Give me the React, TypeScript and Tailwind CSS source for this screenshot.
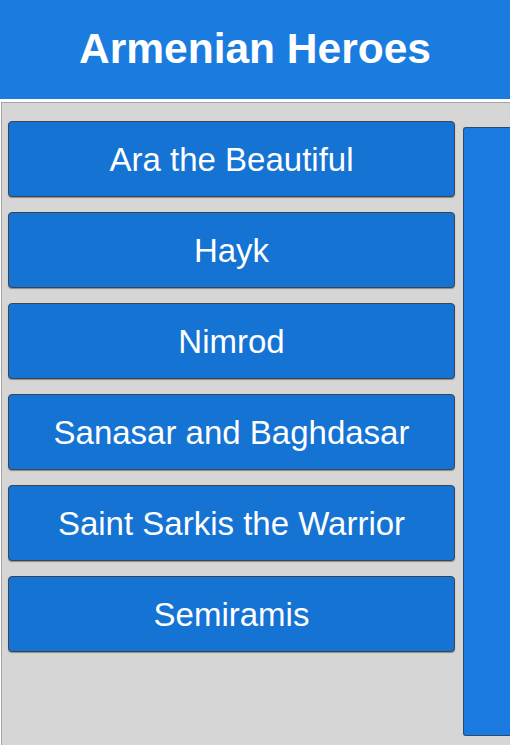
const heroes = [
  'Ara the Beautiful',
  'Hayk',
  'Nimrod',
  'Sanasar and Baghdasar',
  'Saint Sarkis the Warrior',
  'Semiramis',
];

export default function App() {
  return (
    <div
      className="w-[510px] h-[745px] overflow-hidden bg-white flex flex-col"
      style={{ fontFamily: '"Liberation Sans", Arial, sans-serif' }}
    >
      {/* Title bar */}
      <header className="h-[99px] shrink-0 bg-[#1a7cde] flex items-center justify-center">
        <h1 className="text-[42.5px] font-bold text-white leading-none pb-[1px]">Armenian Heroes</h1>
      </header>

      {/* Content panel */}
      <div className="mt-[3px] ml-[1px] flex-1 bg-[#d6d6d6] border-t border-l border-[#a3a3a3] flex pt-[18px] pl-[6px]">
        {/* Hero list */}
        <div className="w-[447px] flex flex-col gap-[15px]">
          {heroes.map((name) => (
            <button
              key={name}
              className="h-[76px] rounded-[4px] bg-[#1573d4] border border-[#3c4450] shadow-[0_1px_1px_rgba(0,0,0,0.35)] text-white text-[33px] leading-none flex items-center justify-center"
            >
              {name}
            </button>
          ))}
        </div>

        {/* Detail pane */}
        <div className="ml-[8px] mt-[6px] flex-1 h-[609px] bg-[#1a7ae0] border-l border-t border-b border-[#2a4a6e] rounded-l-[3px]" />
      </div>
    </div>
  );
}
